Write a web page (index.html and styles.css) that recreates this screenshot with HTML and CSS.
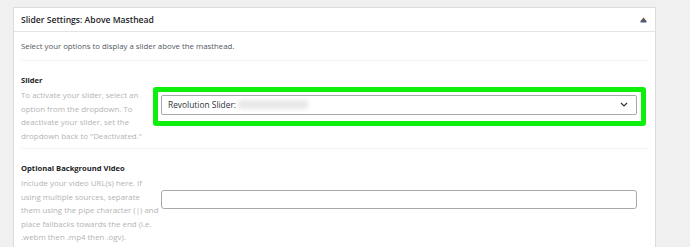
FILE: index.html
```html
<!DOCTYPE html>
<html lang="en">
<head>
  <meta charset="UTF-8">
  <meta name="viewport" content="width=device-width, initial-scale=1.0">
  <title>Slider Settings</title>
  <link rel="stylesheet" href="styles.css">
</head>
<body>
  <div class="postbox">
    <div class="postbox-header">
      <h2>Slider Settings: Above Masthead</h2>
      <span class="toggle">
        <svg width="7" height="6" viewBox="0 0 7 6">
          <path d="M3.5 0.5 L6.5 4 L0.5 4 Z" fill="#6b5a4a"/>
          <rect x="0.5" y="4" width="6" height="1.5" fill="#3f5d8a"/>
        </svg>
      </span>
    </div>

    <div class="inside">
      <p class="intro">Select your options to display a slider above the masthead.</p>

      <div class="option">
        <div class="option-label">
          <h4>Slider</h4>
          <p>To activate your slider, select an<br>option from the dropdown. To<br>deactivate your slider, set the<br>dropdown back to "Deactivated."</p>
        </div>
        <div class="option-field">
          <div class="select-box">
            <span class="select-text">Revolution Slider:</span>
            <span class="blurred"></span>
            <svg class="chevron" width="8" height="5" viewBox="0 0 8 5">
              <path d="M1 1 L4 4 L7 1" fill="none" stroke="#2c3338" stroke-width="1.2"/>
            </svg>
          </div>
          <div class="highlight"></div>
        </div>
      </div>

      <div class="option">
        <div class="option-label">
          <h4>Optional Background Video</h4>
          <p>Include your video URL(s) here. If<br>using multiple sources, separate<br>them using the pipe character (|) and<br>place fallbacks towards the end (i.e.<br>.webm then .mp4 then .ogv).</p>
        </div>
        <div class="option-field">
          <div class="text-box"></div>
        </div>
      </div>
    </div>
  </div>
</body>
</html>
```

FILE: styles.css
```css
body, html {
  margin: 0;
  padding: 0;
  font-family: "Open Sans", Arial, sans-serif;
  background-color: #f0f0f1;
}

body {
  padding: 7px 34px 0 13px;
}

.postbox {
  background-color: #ffffff;
  border: 1px solid #dcdcde;
  border-bottom: none;
  height: 240px;
  overflow: hidden;
}

.postbox-header {
  display: flex;
  align-items: center;
  justify-content: space-between;
  height: 23px;
  padding: 0 7px;
  border-bottom: 1px solid #e4e4e4;
}

.postbox-header h2 {
  margin: 0;
  font-size: 8.6px;
  font-weight: 600;
  color: #1d2327;
}

.toggle {
  display: flex;
  margin-right: 1px;
}

.inside {
  padding: 0 7px;
}

.intro {
  margin: 0;
  padding: 7px 0;
  font-size: 7.8px;
  line-height: 14px;
  color: #50575e;
  border-bottom: 1px solid #f2f2f2;
}

.option {
  display: flex;
  align-items: center;
  border-bottom: 1px solid #f2f2f2;
}

.option-label {
  width: 137px;
  flex-shrink: 0;
  padding: 12px 0 5px;
}

.option-label h4 {
  margin: 0 0 2px;
  font-size: 7.6px;
  line-height: 14px;
  font-weight: 700;
  color: #1d2327;
}

.option-label p {
  margin: 0;
  font-size: 7.9px;
  line-height: 13.5px;
  color: #b4b4b4;
  white-space: nowrap;
}

.option-field {
  position: relative;
  flex: 1;
  margin-left: 3px;
  margin-right: 11px;
}

.select-box {
  display: flex;
  align-items: center;
  height: 18px;
  padding: 0 6px;
  border: 1px solid #a7aaad;
  border-radius: 2px;
  font-size: 8.4px;
  color: #2c3338;
}

.blurred {
  width: 70px;
  height: 9px;
  margin-left: 2px;
  border-radius: 4px;
  background-color: #e8e8e8;
  filter: blur(2px);
}

.chevron {
  margin-left: auto;
  margin-right: 2px;
}

.highlight {
  position: absolute;
  top: -8px;
  left: -8px;
  right: -9px;
  bottom: -11px;
  border: 5px solid #0cf00c;
  border-radius: 3px;
}

.text-box {
  height: 17px;
  border: 1px solid #a7aaad;
  border-radius: 3px;
}
```
